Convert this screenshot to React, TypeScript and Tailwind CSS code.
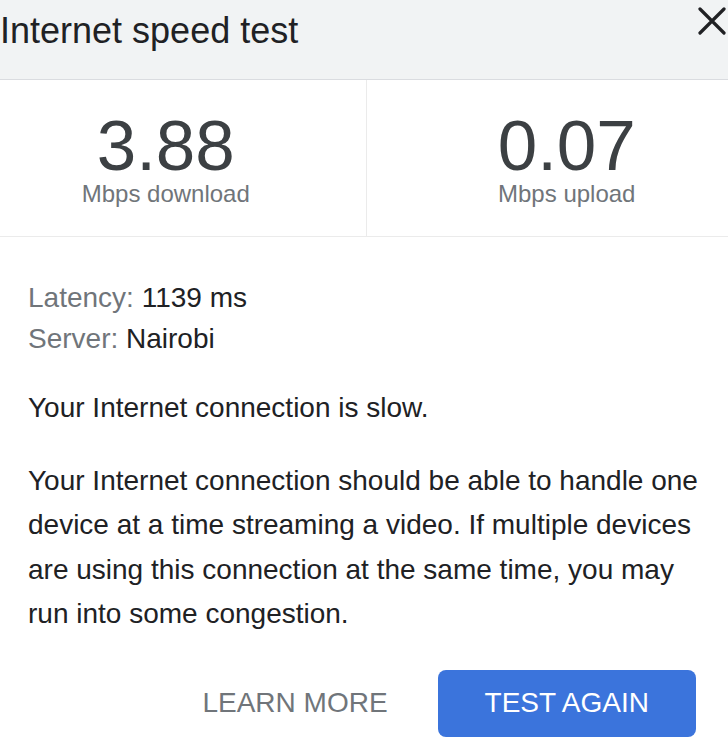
import React from "react";

const stats = [
  { value: "3.88", label: "Mbps download" },
  { value: "0.07", label: "Mbps upload" },
];

const App = () => {
  return (
    <div className="w-[728px] h-[741px] overflow-hidden bg-white font-['Liberation_Sans',Arial,sans-serif] text-[#202124]">
      <div className="w-[801px] -ml-[34px]">
        {/* header */}
        <div className="flex items-start justify-between h-[80px] pl-[34px] pr-[41px] bg-[#f1f3f4] border-b border-[#dadce0]">
          <h1 className="pt-[13px] text-[36px] leading-none font-normal">
            Internet speed test
          </h1>
          <button className="mt-[7px] text-[#202124]" aria-label="Close">
            <svg width="28" height="28" viewBox="0 0 28 28">
              <path
                d="M2 2L26 26M26 2L2 26"
                stroke="currentColor"
                strokeWidth="3.2"
                strokeLinecap="round"
              />
            </svg>
          </button>
        </div>

        {/* results */}
        <div className="grid grid-cols-2 border-b border-[#ebebeb]">
          {stats.map((s, i) => (
            <div
              key={s.label}
              className={
                "flex flex-col items-center pt-[34px] pb-[28px] " +
                (i === 0 ? "border-r border-[#ebebeb]" : "")
              }
            >
              <div className="text-[71px] leading-[64px] text-[#3c4043]">
                {s.value}
              </div>
              <div className="mt-[2px] text-[24px] leading-[28px] text-[#70757a]">
                {s.label}
              </div>
            </div>
          ))}
        </div>

        {/* details */}
        <div className="pl-[62px] pt-[40px] text-[28px]">
          <div className="leading-[41px]">
            <div>
              <span className="text-[#70757a]">Latency: </span>1139 ms
            </div>
            <div>
              <span className="text-[#70757a]">Server: </span>Nairobi
            </div>
          </div>
          <p className="mt-[27px] leading-[44.5px]">
            Your Internet connection is slow.
          </p>
          <p className="mt-[28px] w-[678px] leading-[44.5px]">
            Your Internet connection should be able to handle one device at a
            time streaming a video. If multiple devices are using this
            connection at the same time, you may run into some congestion.
          </p>
        </div>

        <div className="flex justify-end items-center gap-[24px] mt-[33px] pr-[71px]">
          <button className="px-[26px] h-[67px] text-[28px] text-[#70757a]">
            LEARN MORE
          </button>
          <button className="px-[47px] h-[67px] rounded-[8px] bg-[#3b74dc] text-[28px] text-white">
            TEST AGAIN
          </button>
        </div>
      </div>
    </div>
  );
};

export default App;
